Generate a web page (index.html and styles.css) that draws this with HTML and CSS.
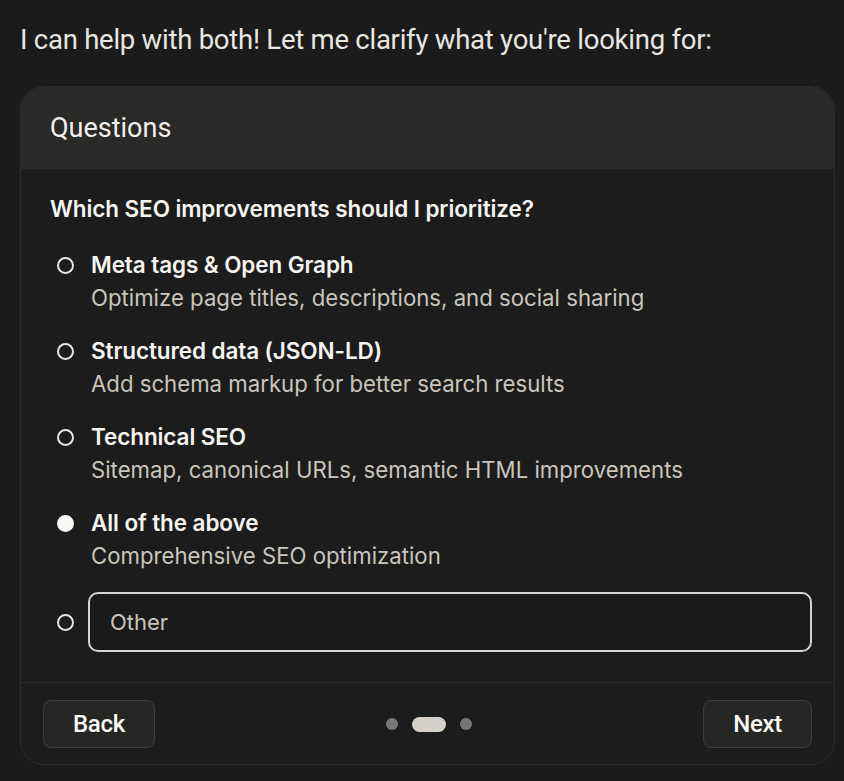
FILE: index.html
```html
<!DOCTYPE html>
<html>
<head>
<meta charset="utf-8">
<link rel="stylesheet" href="styles.css">
</head>
<body>
<div class="page">
  <p class="intro">I can help with both! Let me clarify what you're looking for:</p>
  <div class="card">
    <div class="card-head">Questions</div>
    <div class="card-body">
      <div class="question">Which SEO improvements should I prioritize?</div>
      <div class="options">
        <div class="option">
          <span class="radio"></span>
          <div class="opt-text">
            <div class="opt-label">Meta tags &amp; Open Graph</div>
            <div class="opt-desc">Optimize page titles, descriptions, and social sharing</div>
          </div>
        </div>
        <div class="option">
          <span class="radio"></span>
          <div class="opt-text">
            <div class="opt-label">Structured data (JSON-LD)</div>
            <div class="opt-desc">Add schema markup for better search results</div>
          </div>
        </div>
        <div class="option">
          <span class="radio"></span>
          <div class="opt-text">
            <div class="opt-label">Technical SEO</div>
            <div class="opt-desc">Sitemap, canonical URLs, semantic HTML improvements</div>
          </div>
        </div>
        <div class="option">
          <span class="radio checked"></span>
          <div class="opt-text">
            <div class="opt-label">All of the above</div>
            <div class="opt-desc">Comprehensive SEO optimization</div>
          </div>
        </div>
        <div class="option other">
          <span class="radio"></span>
          <div class="other-input">Other</div>
        </div>
      </div>
    </div>
    <div class="card-foot">
      <button class="btn">Back</button>
      <div class="dots">
        <span class="dot"></span>
        <span class="dot active"></span>
        <span class="dot"></span>
      </div>
      <button class="btn">Next</button>
    </div>
  </div>
</div>
</body>
</html>
```
FILE: styles.css
```css
html, body {
  margin: 0;
  padding: 0;
  background: #1b1b1b;
}
.page {
  padding: 23px 9px 15px 20px;
  font-family: Roboto, "Liberation Sans", sans-serif;
}
.intro {
  margin: 0 0 29px 0;
  font-size: 27.5px;
  line-height: 34px;
  color: #e8e6e1;
  letter-spacing: -0.25px;
}
.card {
  border: 1px solid #2c2c2b;
  border-radius: 24px;
  overflow: hidden;
  background: #1c1c1c;
}
.card-head {
  background: #292927;
  height: 82px;
  padding-left: 29px;
  display: flex;
  align-items: center;
  font-size: 27px;
  color: #f2f0ec;
}
.card-body {
  padding: 25px 22px 30px 29px;
  border-bottom: 1px solid #2c2c2b;
  font-family: Inter, "Noto Sans", sans-serif;
}
.question {
  font-size: 22.5px;
  font-weight: 600;
  color: #f5f4f0;
  line-height: 30px;
  letter-spacing: -0.1px;
}
.options {
  margin-top: 26px;
  display: flex;
  flex-direction: column;
  gap: 20px;
}
.option {
  display: flex;
  align-items: flex-start;
  gap: 17px;
}
.radio {
  margin-left: 7px;
  margin-top: 7px;
  width: 17px;
  height: 17px;
  border: 2px solid #e8e6e1;
  border-radius: 50%;
  box-sizing: border-box;
  flex: none;
}
.radio.checked {
  background: #faf8f4;
  border-color: #faf8f4;
}
.opt-label {
  font-size: 22.5px;
  font-weight: 600;
  color: #f5f4f0;
  line-height: 30px;
  letter-spacing: -0.1px;
}
.opt-desc {
  font-size: 22.2px;
  color: #c9c5bd;
  line-height: 36px;
}
.option.other {
  align-items: center;
  gap: 14px;
  margin-top: -2px;
}
.option.other .radio {
  margin-top: 0;
}
.other-input {
  flex: 1;
  height: 60px;
  box-sizing: border-box;
  border: 2px solid #d6d4cf;
  border-radius: 10px;
  background: #1a1a1a;
  display: flex;
  align-items: center;
  padding-left: 20px;
  font-size: 22px;
  color: #c9c5bd;
}
.card-foot {
  display: flex;
  align-items: center;
  justify-content: space-between;
  padding: 17px 22px 16px 22px;
}
.btn {
  height: 48px;
  padding: 0 29px;
  background: #262624;
  border: 1px solid #3c3c39;
  border-radius: 8px;
  color: #fbfaf6;
  font-family: Roboto, "Liberation Sans", sans-serif;
  font-weight: 500;
  font-size: 24px;
  letter-spacing: -0.3px;
}
.dots {
  display: flex;
  align-items: center;
  gap: 14px;
}
.dot {
  width: 12px;
  height: 12px;
  border-radius: 6px;
  background: #767674;
}
.dot.active {
  width: 34px;
  height: 15px;
  border-radius: 8px;
  background: #d5d1ca;
}
```
